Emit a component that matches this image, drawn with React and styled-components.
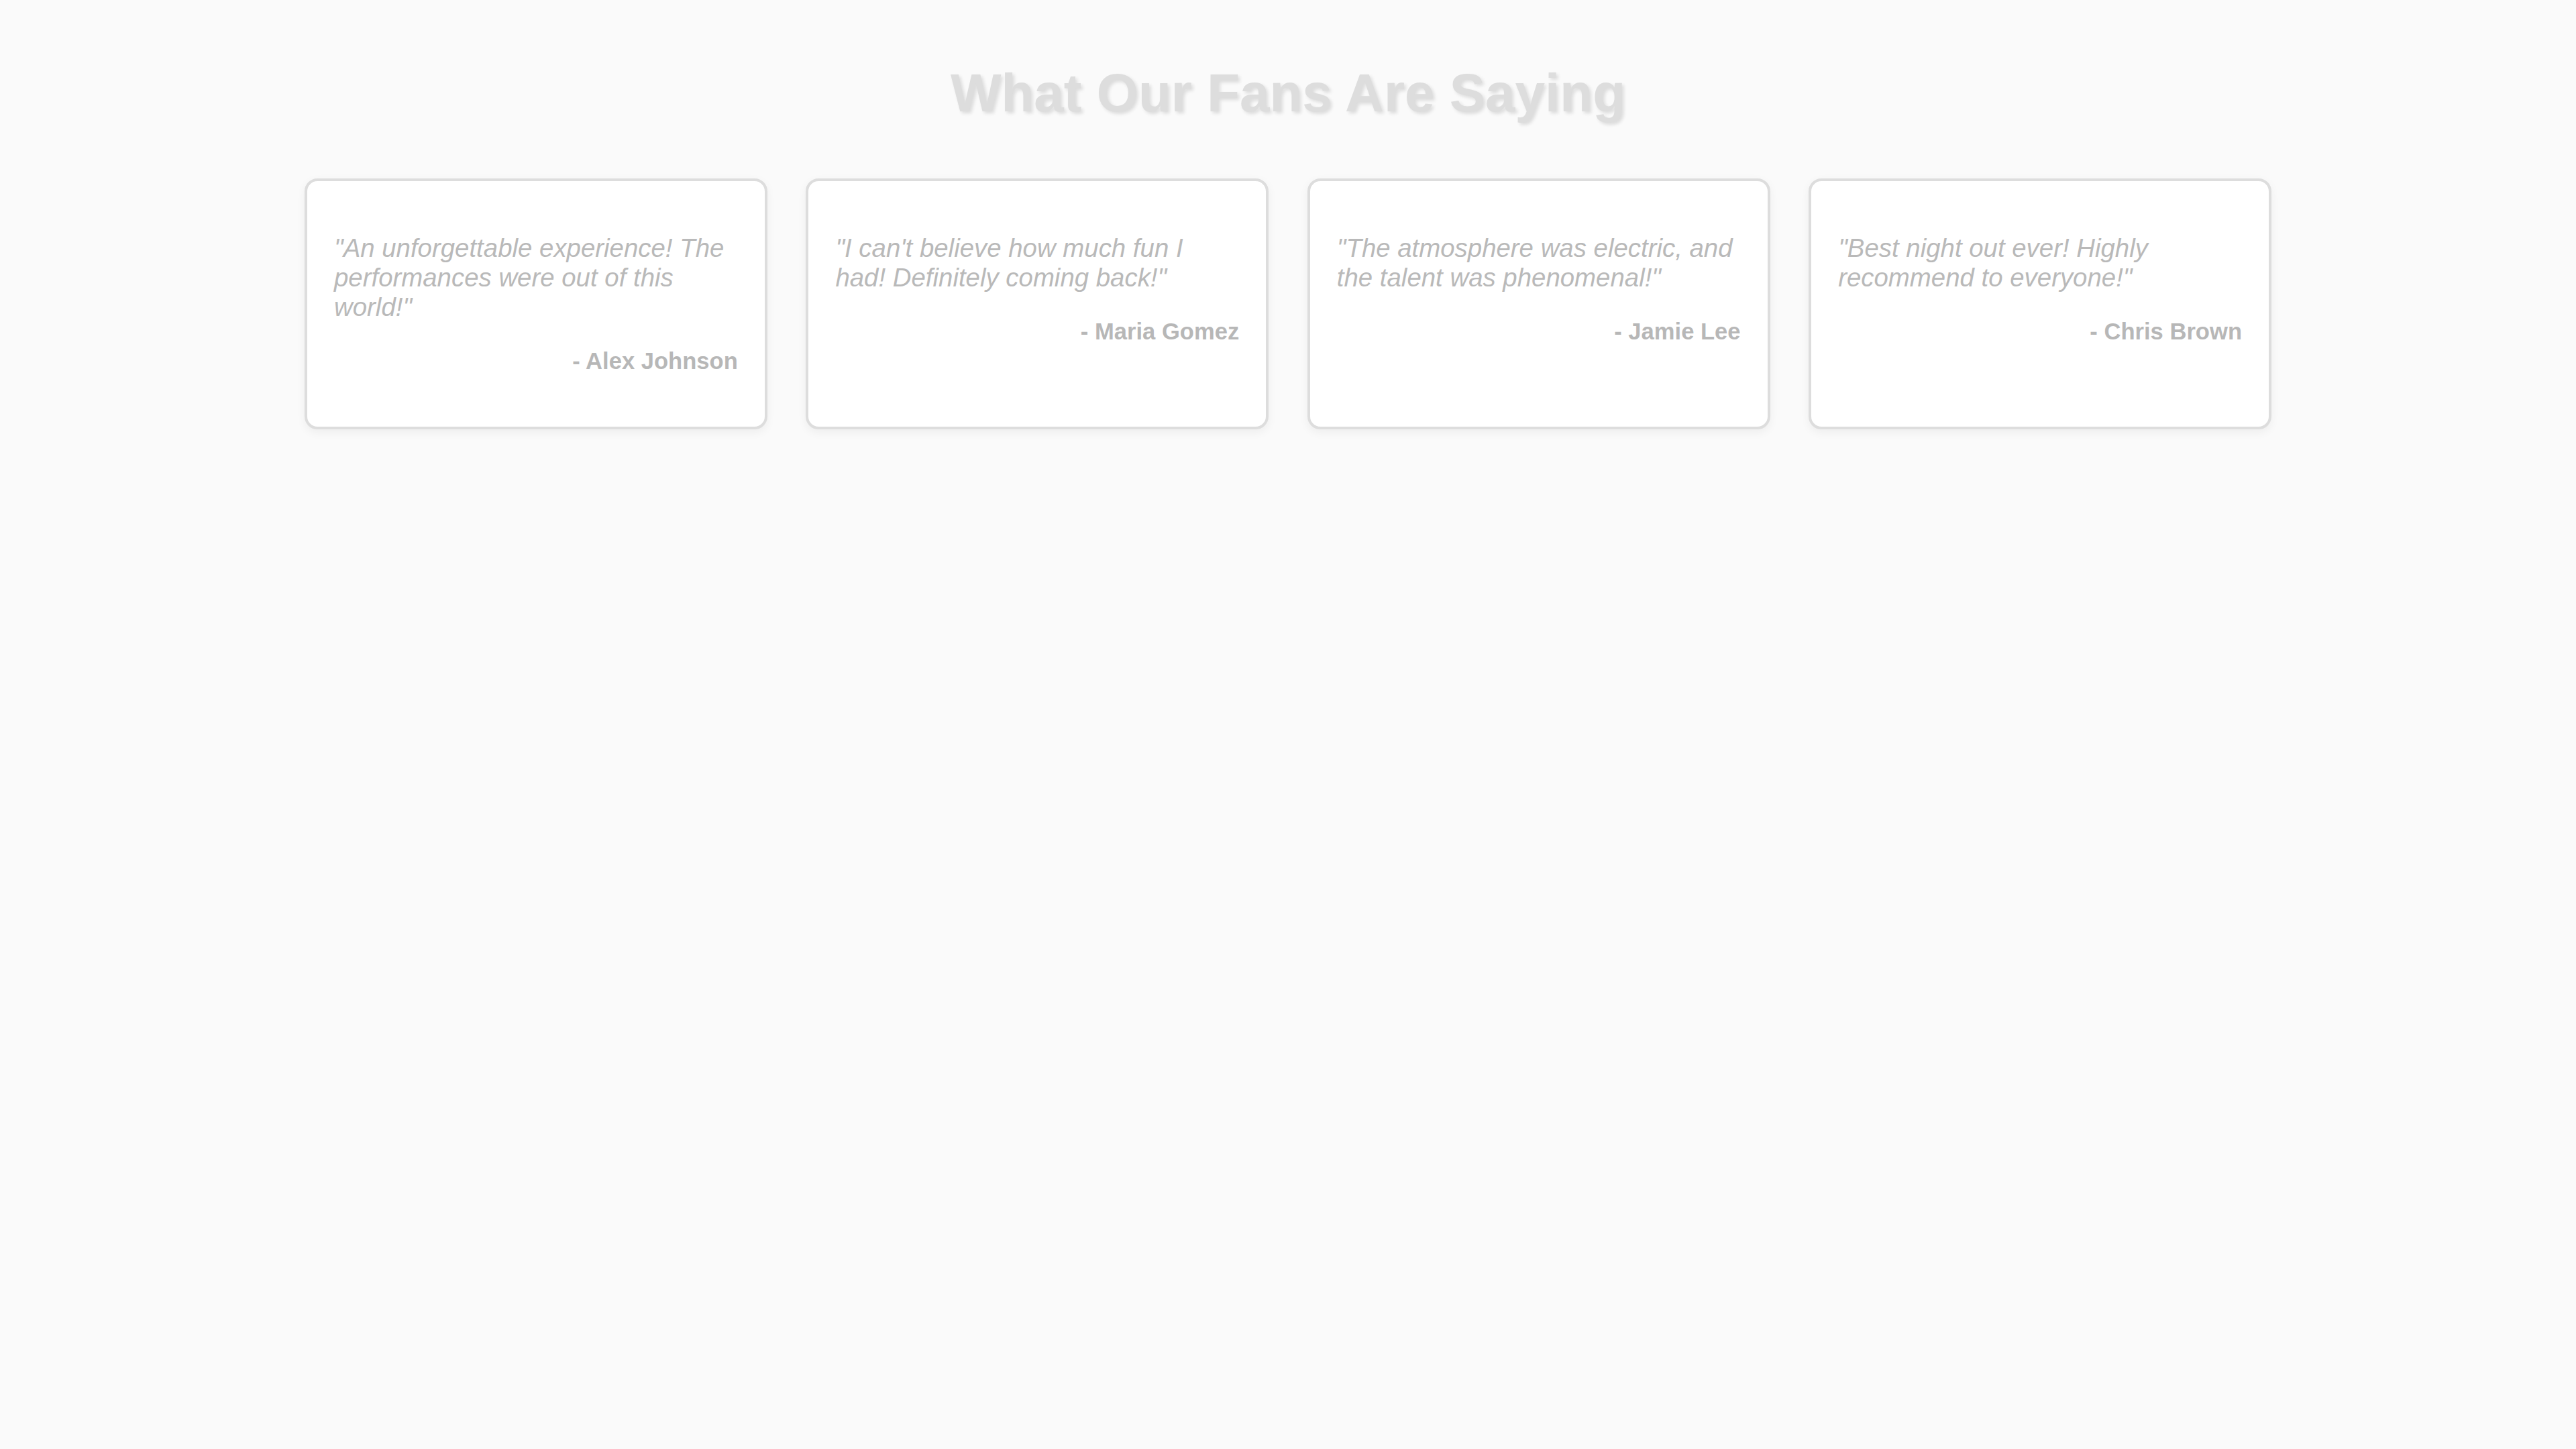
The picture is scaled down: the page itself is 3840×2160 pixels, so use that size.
import React from 'react'
import styled, { createGlobalStyle } from 'styled-components'

const GlobalStyle = createGlobalStyle`
  html, body {
    margin: 0;
    padding: 0;
    background: #fafafa;
    font-family: "Liberation Sans", Arial, sans-serif;
  }
`

const Page = styled.div`
  min-height: 100vh;
  background: #fafafa;
  padding: 93px 0 0 0;
  box-sizing: border-box;
`

const Title = styled.h1`
  margin: 0;
  text-align: center;
  font-size: 80px;
  font-weight: bold;
  color: #dddddd;
  text-shadow: 3px 3px 5px rgba(0, 0, 0, 0.12);
`

const Grid = styled.div`
  max-width: 2932px;
  margin: 81px auto 0 auto;
  display: grid;
  grid-template-columns: repeat(4, 1fr);
  gap: 57.6px;
`

const Card = styled.div`
  background: #fff;
  border: 4.8px solid #dddddd;
  border-radius: 19.2px;
  padding: 0 40px;
  box-shadow: 0 4.8px 14px rgba(0, 0, 0, 0.05);
  display: flow-root;
`

const Quote = styled.p`
  margin: 78.4px 0 38.4px 0;
  font-size: 38.4px;
  font-style: italic;
  color: #b9b9b9;
`

const Author = styled.p`
  margin: 38.4px 0 78.6px 0;
  text-align: right;
  font-size: 34.6px;
  font-weight: bold;
  color: #b7b7b7;
`

const testimonials = [
  { quote: '"An unforgettable experience! The performances were out of this world!"', name: 'Alex Johnson' },
  { quote: '"I can\'t believe how much fun I had! Definitely coming back!"', name: 'Maria Gomez' },
  { quote: '"The atmosphere was electric, and the talent was phenomenal!"', name: 'Jamie Lee' },
  { quote: '"Best night out ever! Highly recommend to everyone!"', name: 'Chris Brown' },
]

const App = () => {
  return (
    <Page>
      <GlobalStyle />
      <Title>What Our Fans Are Saying</Title>
      <Grid>
        {testimonials.map(t => (
          <Card key={t.name}>
            <Quote>{t.quote}</Quote>
            <Author>- {t.name}</Author>
          </Card>
        ))}
      </Grid>
    </Page>
  )
}

export default App
